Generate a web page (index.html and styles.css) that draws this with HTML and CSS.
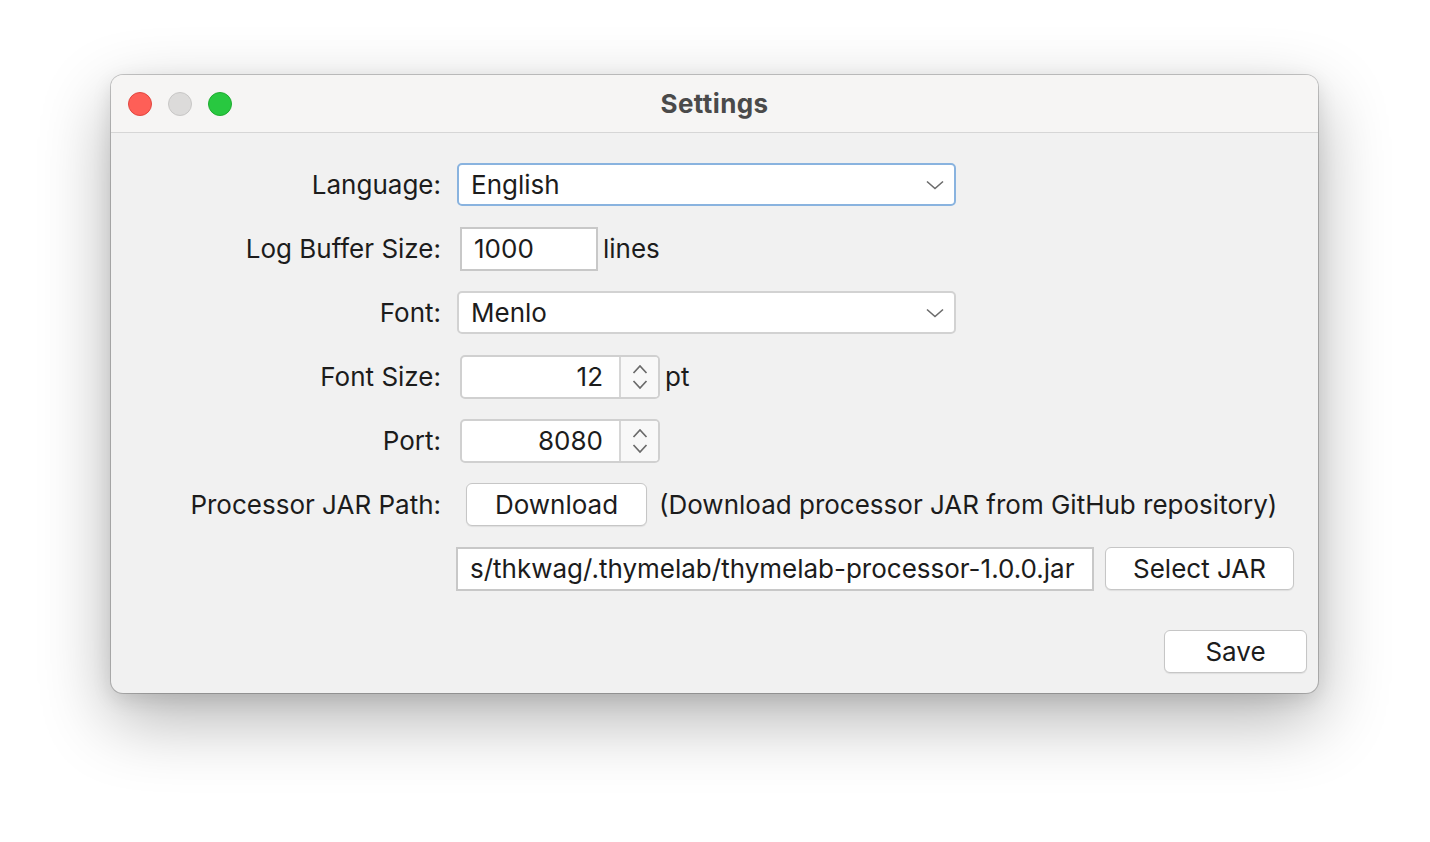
FILE: index.html
```html
<!DOCTYPE html>
<html lang="en">
<head>
<meta charset="utf-8">
<title>Settings</title>
<link rel="stylesheet" href="styles.css">
</head>
<body>
<div class="window">
  <div class="titlebar">
    <div class="lights">
      <span class="light red"></span>
      <span class="light gray"></span>
      <span class="light green"></span>
    </div>
    <div class="title">Settings</div>
  </div>
  <div class="content">
    <div class="form">
      <div class="label">Language:</div>
      <div class="cell">
        <div class="combo focused">
          <span class="combo-text">English</span>
          <svg class="chev" width="18" height="10" viewBox="0 0 18 10"><path d="M1 1.5 L9 8.5 L17 1.5" fill="none" stroke="#6b6b6b" stroke-width="1.6"/></svg>
        </div>
      </div>

      <div class="label">Log Buffer Size:</div>
      <div class="cell">
        <div class="field small">1000</div>
        <span class="unit">lines</span>
      </div>

      <div class="label">Font:</div>
      <div class="cell">
        <div class="combo">
          <span class="combo-text">Menlo</span>
          <svg class="chev" width="18" height="10" viewBox="0 0 18 10"><path d="M1 1.5 L9 8.5 L17 1.5" fill="none" stroke="#6b6b6b" stroke-width="1.6"/></svg>
        </div>
      </div>

      <div class="label">Font Size:</div>
      <div class="cell">
        <div class="spinner">
          <span class="spin-value">12</span>
          <span class="spin-arrows">
            <svg width="16" height="26" viewBox="0 0 16 26"><path d="M1.5 9 L8 2 L14.5 9" fill="none" stroke="#6a6a6a" stroke-width="1.7"/><path d="M1.5 17 L8 24 L14.5 17" fill="none" stroke="#6a6a6a" stroke-width="1.7"/></svg>
          </span>
        </div>
        <span class="unit">pt</span>
      </div>

      <div class="label">Port:</div>
      <div class="cell">
        <div class="spinner">
          <span class="spin-value">8080</span>
          <span class="spin-arrows">
            <svg width="16" height="26" viewBox="0 0 16 26"><path d="M1.5 9 L8 2 L14.5 9" fill="none" stroke="#6a6a6a" stroke-width="1.7"/><path d="M1.5 17 L8 24 L14.5 17" fill="none" stroke="#6a6a6a" stroke-width="1.7"/></svg>
          </span>
        </div>
      </div>

      <div class="label">Processor JAR Path:</div>
      <div class="cell">
        <div class="button download">Download</div>
        <span class="hint">(Download processor JAR from GitHub repository)</span>
      </div>

      <div class="label"></div>
      <div class="cell">
        <div class="field path">s/thkwag/.thymelab/thymelab-processor-1.0.0.jar</div>
        <div class="button select">Select JAR</div>
      </div>
    </div>
    <div class="footer">
      <div class="button save">Save</div>
    </div>
  </div>
</div>
</body>
</html>
```
FILE: styles.css
```css
* { box-sizing: border-box; }
html, body { margin: 0; padding: 0; background: #ffffff; }
body {
  font-family: Inter, "Noto Sans", "Liberation Sans", sans-serif;
  color: #1c1c1c;
  width: 1430px;
  height: 842px;
  overflow: hidden;
  padding-top: 75px;
  padding-left: 111px;
}
.window {
  width: 1207px;
  height: 618px;
  border-radius: 12px;
  overflow: hidden;
  background: #f1f1f1;
  box-shadow: 0 0 0 1px rgba(0,0,0,0.2), 0 26px 70px rgba(0,0,0,0.3), 0 6px 20px rgba(0,0,0,0.1);
}
.titlebar {
  height: 58px;
  background: #f6f5f4;
  border-bottom: 1px solid #d6d6d6;
  display: flex;
  align-items: center;
  position: relative;
}
.lights {
  display: flex;
  gap: 16px;
  padding-left: 17px;
}
.light {
  width: 24px;
  height: 24px;
  border-radius: 50%;
  display: block;
}
.light.red { background: #fe5f57; border: 1px solid #e2463f; }
.light.gray { background: #dcdbda; border: 1px solid #c8c7c6; }
.light.green { background: #28c840; border: 1px solid #1eac2f; }
.title {
  position: absolute;
  left: 0; right: 0; top: 0; bottom: 0;
  display: flex;
  align-items: center;
  justify-content: center;
  font-weight: 700;
  font-size: 26px;
  letter-spacing: 0.4px;
  color: #4a4a4a;
  pointer-events: none;
}
.content {
  padding-top: 30px;
}
.form {
  display: grid;
  grid-template-columns: 330px 1fr;
  grid-auto-rows: 43px;
  row-gap: 21px;
  column-gap: 15px;
  font-size: 26px;
}
.label {
  text-align: right;
  align-self: center;
  white-space: nowrap;
}
.cell {
  display: flex;
  align-items: center;
  white-space: nowrap;
}
.combo {
  margin-left: 1px;
  width: 499px;
  height: 43px;
  background: #ffffff;
  border: 2px solid #d2d2d2;
  border-radius: 5px;
  display: flex;
  align-items: center;
  justify-content: space-between;
  padding: 0 10px 0 12px;
}
.combo.focused { border-color: #89b3df; }
.chev { display: block; }
.field {
  height: 44px;
  background: #ffffff;
  border: 2px solid #c8c8c8;
  display: flex;
  align-items: center;
  padding-left: 12px;
}
.field.small {
  margin-left: 4px;
  width: 138px;
}
.unit { margin-left: 5px; }
.spinner {
  margin-left: 4px;
  width: 200px;
  height: 44px;
  background: #ffffff;
  border: 2px solid #d0d0d0;
  border-radius: 5px;
  display: flex;
  overflow: hidden;
}
.spin-value {
  flex: 1;
  text-align: right;
  padding-right: 16px;
  align-self: center;
}
.spin-arrows {
  width: 39px;
  border-left: 2px solid #d6d6d6;
  background: #f8f8f8;
  display: flex;
  align-items: center;
  justify-content: center;
}
.spin-arrows svg { display: block; }
.button {
  height: 43px;
  background: #ffffff;
  border: 1px solid #c6c6c6;
  border-radius: 6px;
  box-shadow: 0 1px 1px rgba(0,0,0,0.08);
  display: flex;
  align-items: center;
  justify-content: center;
}
.button.download { margin-left: 10px; width: 181px; }
.hint { margin-left: 12px; }
.field.path { width: 638px; margin-left: 0; }
.button.select { margin-left: 11px; width: 189px; }
.footer {
  display: flex;
  justify-content: flex-end;
  padding-top: 40px;
  padding-right: 11px;
  font-size: 26px;
}
.button.save { width: 143px; }
```
